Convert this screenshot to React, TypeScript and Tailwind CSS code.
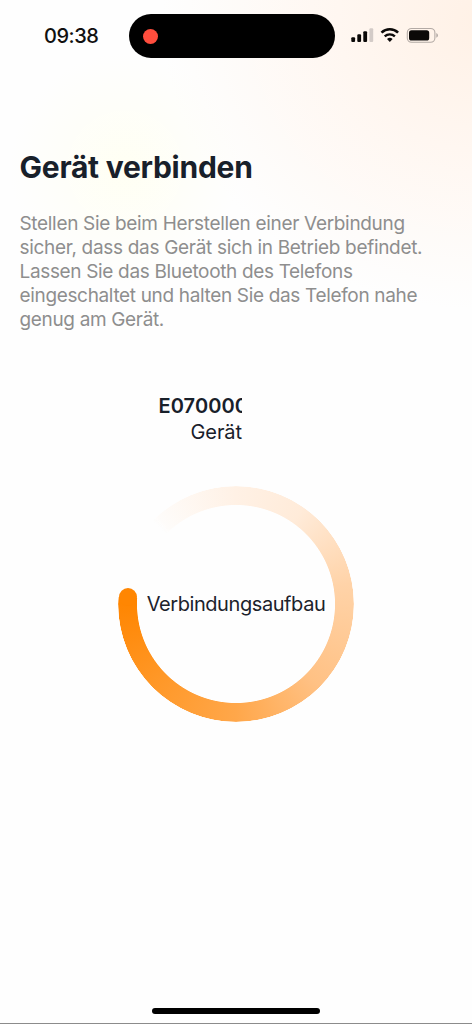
const lines = [
  { text: "Stellen Sie beim Herstellen einer Verbindung", tracking: "tracking-[-0.32px]" },
  { text: "sicher, dass das Gerät sich in Betrieb befindet.", tracking: "tracking-[-0.31px]" },
  { text: "Lassen Sie das Bluetooth des Telefons", tracking: "tracking-[-0.34px]" },
  { text: "eingeschaltet und halten Sie das Telefon nahe", tracking: "tracking-[-0.34px]" },
  { text: "genug am Gerät.", tracking: "tracking-[-0.34px]" },
];

function StatusIcons() {
  return (
    <svg className="mb-0.5 block h-4 w-[90px]" viewBox="350 27 90 16" fill="none">
      <g fill="#0b0908">
        <rect x="351.3" y="37.2" width="3.8" height="4.8" rx="1.1" />
        <rect x="357.3" y="34.3" width="3.8" height="7.7" rx="1.1" />
        <rect x="363.3" y="31.2" width="3.8" height="10.8" rx="1.1" />
        <rect x="369.4" y="28.2" width="3.8" height="13.8" rx="1.1" fill="#d3cbc7" />
      </g>
      <path d="M381.5 32.6a12 12 0 0 1 16.6 0" stroke="#0b0908" strokeWidth="2.6" />
      <path d="M384.7 36.4a7.5 7.5 0 0 1 10.2 0" stroke="#0b0908" strokeWidth="2.4" />
      <path d="M387 39.1a4.2 4.2 0 0 1 5.6 0l-2.8 2.8z" fill="#0b0908" />
      <rect x="407.3" y="28.5" width="27.6" height="13.8" rx="4.3" stroke="#b3aaa5" strokeWidth="1.1" />
      <rect x="409" y="30.2" width="20.2" height="10.4" rx="2.6" fill="#0b0908" />
      <path d="M436.3 33.1q1.7.8 1.7 2.3t-1.7 2.3z" fill="#b3aaa5" />
    </svg>
  );
}

function ProgressRing() {
  return (
    <div className="relative flex h-[236px] w-[236px] items-center justify-center">
      <div className="absolute inset-0 rounded-full bg-[conic-gradient(from_0deg,#fff1e5_0deg,#ffebd9_35deg,#ffd3a8_80deg,#ffc184_135deg,#ffa74a_180deg,#ff9828_225deg,#ff8602_270deg,#ff8602_273.5deg,#fefefe00_273.6deg,#fefefe00_315deg,#fefcfa_318deg,#fff1e5_360deg)] mask-[radial-gradient(circle_at_center,transparent_98.6px,black_99.4px,black_117.4px,transparent_118.2px)]" />
      <div className="absolute left-[0.6px] top-[101.5px] h-[18.8px] w-[18.8px] rounded-full bg-[#ff8602]" />
      <span className="relative whitespace-nowrap text-[20px] leading-6 tracking-[-0.42px] text-[#1c222b]">Verbindungsaufbau</span>
    </div>
  );
}

export default function App() {
  return (
    <div className="flex h-[1024px] w-[472px] flex-col overflow-hidden border-b border-[#8b8b8b] bg-[#fefefe] bg-[radial-gradient(ellipse_115px_115px_at_125px_168px,#fffff3,#fffff300),radial-gradient(ellipse_320px_290px_at_482px_20px,#fff1e6,#fff7f1_45%,#fefefe00)] font-['Inter',sans-serif]">
      <header className="flex h-[72px] shrink-0 items-center pl-11">
        <time className="w-[85px] whitespace-nowrap text-[20px] font-medium leading-6 tracking-[-0.45px] text-[#101010]">09:38</time>
        <div className="flex h-11 w-[206px] items-center rounded-full bg-black pl-3.5">
          <span className="h-[15px] w-[15px] rounded-full bg-[#ff4d3d]" />
        </div>
        <div className="ml-[15px]">
          <StatusIcons />
        </div>
      </header>
      <main className="flex flex-1 flex-col pt-[76px]">
        <h1 className="pl-[19.5px] text-[30px] font-bold leading-[38px] tracking-[-0.25px] text-[#18202a]">
          <span>Gerät verbinden</span>
        </h1>
        <p className="mt-[26px] pl-[19.5px] text-[19px] leading-6 text-[#8e8e8e]">
          {lines.map((line) => (
            <span key={line.text} className="block whitespace-nowrap">
              <span className={line.tracking}>{line.text}</span>
            </span>
          ))}
        </p>
        <section className="mt-[61px] flex w-[242px] flex-col text-[20px] text-[#18202a]">
          <div className="ml-[158.5px] overflow-hidden whitespace-nowrap font-semibold leading-[26px] tracking-[0.1px]">E070000</div>
          <div className="ml-[190.5px] whitespace-nowrap leading-[26px] tracking-[-0.1px]">Gerät</div>
        </section>
        <div className="mt-[41px] flex justify-center">
          <ProgressRing />
        </div>
      </main>
      <footer className="flex shrink-0 justify-center pb-[9.5px]">
        <div className="h-[6px] w-[168px] rounded-full bg-black" />
      </footer>
    </div>
  );
}
